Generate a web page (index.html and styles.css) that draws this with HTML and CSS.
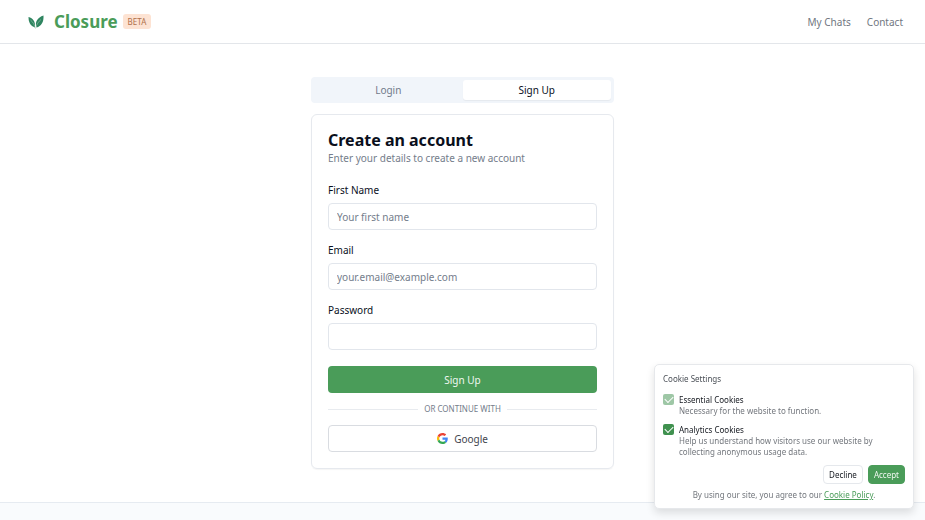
FILE: index.html
```html
<!DOCTYPE html>
<html lang="en">
<head>
  <meta charset="UTF-8">
  <meta name="viewport" content="width=device-width, initial-scale=1">
  <title>Closure - Sign Up</title>
  <link rel="stylesheet" href="styles.css">
</head>
<body>
  <header class="header">
    <a class="brand" href="#">
      <svg class="brand-icon" viewBox="0 0 32 28" aria-hidden="true">
        <path d="M1 4C10 6 15 13 14 25C5 22 1 15 1 4Z" fill="#2f8560"/>
        <path d="M31 1C32 14 26 23 17 25C13 14 19 5 31 1Z" fill="#2f8560"/>
        <path d="M5 10C10 14 13 20 15 27M26 9C21 13 17 19 15 27" fill="none" stroke="#a9cfbc" stroke-width="1"/>
      </svg>
      <span class="brand-name">Closure</span>
      <span class="badge">BETA</span>
    </a>
    <nav class="nav">
      <a href="#">My Chats</a>
      <a href="#">Contact</a>
    </nav>
  </header>

  <main class="main">
    <div class="auth">
      <div class="tabs" role="tablist">
        <button class="tab" type="button" role="tab" aria-selected="false">Login</button>
        <button class="tab active" type="button" role="tab" aria-selected="true">Sign Up</button>
      </div>

      <section class="card">
        <h1>Create an account</h1>
        <p class="subtitle">Enter your details to create a new account</p>
        <form>
          <div class="form-group">
            <label for="name">First Name</label>
            <input type="text" id="name" placeholder="Your first name">
          </div>
          <div class="form-group">
            <label for="email">Email</label>
            <input type="email" id="email" placeholder="your.email@example.com">
          </div>
          <div class="form-group">
            <label for="password">Password</label>
            <input type="password" id="password">
          </div>
          <button class="button primary" type="submit">Sign Up</button>
          <div class="divider">OR CONTINUE WITH</div>
          <button class="button google" type="button">
            <svg class="google-icon" viewBox="0 0 48 48" aria-hidden="true">
              <path fill="#ea4335" d="M24 9.5c3.54 0 6.71 1.22 9.21 3.6l6.85-6.85C35.9 2.38 30.47 0 24 0 14.62 0 6.51 5.38 2.56 13.22l7.98 6.19C12.43 13.72 17.74 9.5 24 9.5z"/>
              <path fill="#4285f4" d="M46.98 24.55c0-1.57-.15-3.09-.38-4.55H24v9.02h12.94c-.58 2.96-2.26 5.48-4.78 7.18l7.73 6c4.51-4.18 7.09-10.36 7.09-17.65z"/>
              <path fill="#fbbc05" d="M10.53 28.59c-.48-1.45-.76-2.99-.76-4.59s.27-3.14.76-4.59l-7.98-6.19C.92 16.46 0 20.12 0 24c0 3.88.92 7.54 2.56 10.78l7.97-6.19z"/>
              <path fill="#34a853" d="M24 48c6.48 0 11.93-2.13 15.89-5.81l-7.73-6c-2.15 1.45-4.92 2.3-8.16 2.3-6.26 0-11.57-4.22-13.47-9.91l-7.98 6.19C6.51 42.62 14.62 48 24 48z"/>
            </svg>
            Google
          </button>
        </form>
      </section>
    </div>
  </main>

  <footer class="footer"></footer>

  <aside class="cookies" aria-label="Cookie Settings">
    <h2>Cookie Settings</h2>
    <div class="option">
      <input type="checkbox" id="essential" checked disabled>
      <div>
        <label for="essential">Essential Cookies</label>
        <p>Necessary for the website to function.</p>
      </div>
    </div>
    <div class="option">
      <input type="checkbox" id="analytics" checked>
      <div>
        <label for="analytics">Analytics Cookies</label>
        <p>Help us understand how visitors use our website by collecting anonymous usage data.</p>
      </div>
    </div>
    <div class="actions">
      <button class="small" type="button">Decline</button>
      <button class="small accept" type="button">Accept</button>
    </div>
    <p class="policy">By using our site, you agree to our <a href="#">Cookie Policy</a>.</p>
  </aside>
</body>
</html>
```

FILE: styles.css
```css
* { box-sizing: border-box; }
body { font-family: "Noto Sans", "Open Sans", sans-serif; font-size: 10px; line-height: 14px; margin: 0; min-height: 100vh; display: flex; flex-direction: column; overflow-x: hidden; background: #fff; color: #0a0f1c; }
h1, h2, p { margin: 0; }
button, input { font-family: inherit; font-size: inherit; line-height: inherit; margin: 0; }
button { cursor: pointer; }

.header { display: flex; align-items: center; justify-content: space-between; height: 44px; padding: 0 22px 0 28px; border-bottom: 1px solid #e3e6ea; }
.brand { display: flex; align-items: center; text-decoration: none; }
.brand-icon { width: 16px; height: 14px; margin-right: 10px; }
.brand-name { font-size: 17px; line-height: 24px; font-weight: 700; color: #4a9c59; }
.badge { margin-left: 5px; padding: 0 5px; border-radius: 3px; background: #fde3d3; color: #b0714a; font-size: 8px; line-height: 15px; }
.nav { display: flex; gap: 16px; }
.nav a { color: #71777f; text-decoration: none; }

.main { padding: 33px 16px; }
.auth { max-width: 303px; margin: 0 auto; }
.tabs { display: flex; padding: 3px; margin-bottom: 11px; border-radius: 4px; background: #f1f5fa; }
.tab { flex: 1; height: 20px; padding: 0; border: none; border-radius: 3px; background: none; color: #717b8b; }
.tab.active { background: #fff; color: #0a0f1c; box-shadow: 0 1px 1px rgba(0,0,0,0.05); }

.card { padding: 16px; border: 1px solid #e6e9ee; border-radius: 6px; box-shadow: 0 1px 1px rgba(0,0,0,0.04); }
.card h1 { font-size: 16px; line-height: 18px; font-weight: 700; }
.subtitle { margin: 2px 0 18px; color: #747d8b; }
.form-group { margin-bottom: 13px; }
.form-group label { display: block; margin-bottom: 6px; }
.form-group input { display: block; width: 100%; height: 27px; padding: 0 8px; border: 1px solid #e2e6ec; border-radius: 4px; background: #fff; }
.form-group input::placeholder { color: #747d8b; opacity: 1; }
.button { display: flex; align-items: center; justify-content: center; gap: 6px; width: 100%; height: 27px; border: 1px solid #d9dce1; border-radius: 4px; background: #fff; color: #3f454e; }
.primary { margin-top: 16px; border: none; background: #4a9c59; color: #f0f8f1; }
.divider { display: flex; align-items: center; gap: 6px; margin: 9px 0; font-size: 8px; color: #747d8b; }
.divider::before, .divider::after { content: ""; flex: 1; height: 1px; background: #e8ebef; }
.google-icon { width: 11px; height: 11px; }

.footer { flex: 1; min-height: 18px; border-top: 1px solid #e6ebf1; background: #f9fbfd; }

.cookies { position: fixed; right: 11px; bottom: 11px; width: 260px; padding: 8px; border: 1px solid #e6e8eb; border-radius: 5px; background: #fff; color: #73777d; font-size: 8px; line-height: 11px; box-shadow: 0 4px 8px rgba(0,0,0,0.12); }
.cookies h2 { margin-bottom: 10px; font-size: 8px; font-weight: 400; color: #4b5057; }
.option { display: flex; gap: 5px; margin-bottom: 8px; }
.option input { appearance: none; flex: none; display: grid; place-items: center; width: 11px; height: 11px; border-radius: 2px; background: #40914f; }
.option input::before { content: ""; width: 7px; height: 4px; margin-bottom: 2px; border-left: 1px solid #fff; border-bottom: 1px solid #fff; transform: rotate(-45deg); }
.option input:disabled { opacity: 0.5; }
.option label { display: block; color: #14181f; }
.actions { display: flex; justify-content: flex-end; gap: 5px; margin-bottom: 5px; }
.small { height: 19px; padding: 0 5px; border: 1px solid #e5e8ec; border-radius: 4px; background: #fff; color: #14181f; line-height: 11px; }
.accept { border-color: #4a9c59; background: #4a9c59; color: #f0f8f1; }
.policy { text-align: center; }
.policy a { color: #4a9c59; }
```
